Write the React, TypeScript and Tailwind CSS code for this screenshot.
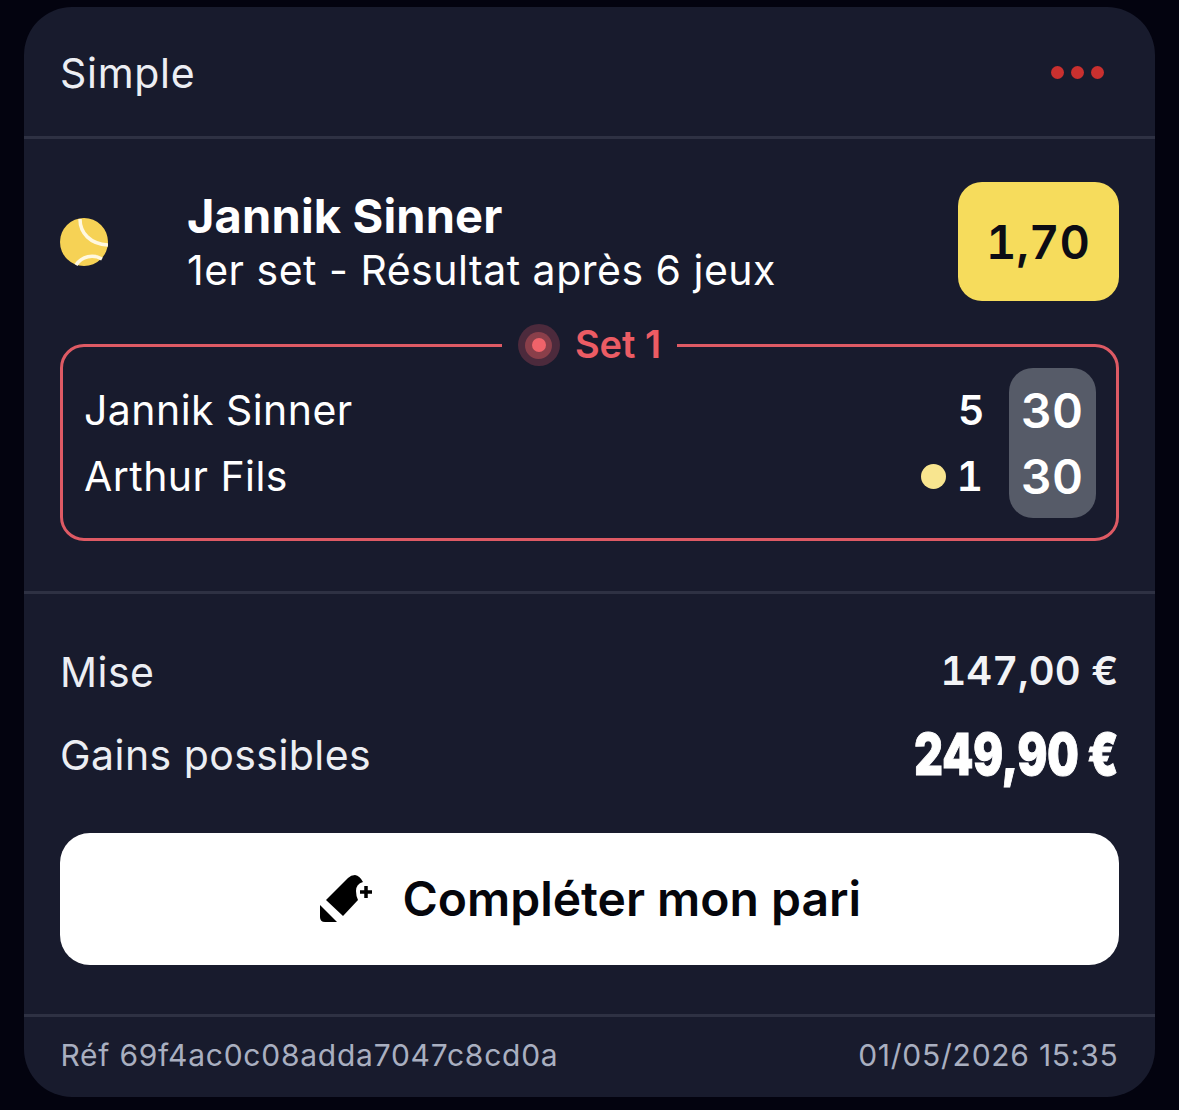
export default function App() {
  return (
    <div className="w-[1179px] h-[1110px] overflow-hidden bg-[#03030f] pt-[7px] pl-[24px] font-['Inter',sans-serif]">
      <div className="w-[1131px] h-[1090px] rounded-[48px] bg-[#181b2d] flex flex-col">
        {/* header */}
        <div className="h-[132px] shrink-0 border-b-[3px] border-[#2e3143] flex items-center justify-between pl-[36px] pr-[51px] pt-[1px]">
          <span className="pt-[2px] text-[41px] leading-none tracking-[0.7px] text-[#eceef3]">Simple</span>
          <div className="flex gap-[7px]">
            <span className="w-[13px] h-[13px] rounded-full bg-[#c9302f]" />
            <span className="w-[13px] h-[13px] rounded-full bg-[#c9302f]" />
            <span className="w-[13px] h-[13px] rounded-full bg-[#c9302f]" />
          </div>
        </div>

        {/* selection */}
        <div className="h-[455px] shrink-0 border-b-[3px] border-[#2e3143] pl-[36px] pr-[36.5px] pt-[43px]">
          <div className="flex items-center h-[119px]">
            <svg width="48" height="48" viewBox="0 0 48 48" className="shrink-0">
              <circle cx="24" cy="24" r="24" fill="#f6d255" />
              <path d="M20 1 C20 15 30 26 48 27" fill="none" stroke="#fff8e0" strokeWidth="3.500" />
              <path d="M16 47 C22 38 33 36 42 41" fill="none" stroke="#fff8e0" strokeWidth="3.500" />
            </svg>
            <div className="ml-[79px] flex-1 pt-[2px]">
              <div className="text-[47px] leading-[54px] font-bold tracking-[0.15px] text-white">Jannik Sinner</div>
              <div className="text-[41px] leading-[54px] tracking-[0.5px] text-white">1er set - Résultat après 6 jeux</div>
            </div>
            <div className="w-[161px] h-[119px] rounded-[24px] bg-[#f6dc5c] flex items-center justify-center pt-[2px] text-[47px] font-semibold tabular-nums text-[#0c0c14]">
              1,70
            </div>
          </div>

          <div className="relative mt-[43px] h-[197px] rounded-[24px] border-[3px] border-[#de5a64] flex items-center justify-between pl-[21px] pr-[20px]">
            <div className="absolute -top-[26px] left-[439px] w-[175px] h-[48px] bg-[#181b2d] flex items-center justify-center gap-[15px]">
              <span className="relative w-[42px] h-[42px] rounded-full bg-[#4c2a3c] flex items-center justify-center">
                <span className="w-[27px] h-[27px] rounded-full bg-[#8a3f4a] flex items-center justify-center">
                  <span className="w-[14px] h-[14px] rounded-full bg-[#f0636a]" />
                </span>
              </span>
              <span className="pb-[2px] text-[38px] leading-none font-semibold text-[#ec5c64]">Set 1</span>
            </div>
            <div className="flex flex-col gap-[17px] pt-[1px] text-[41px] leading-[49px] tracking-[0.45px] text-white">
              <div>Jannik Sinner</div>
              <div>Arthur Fils</div>
            </div>
            <div className="flex items-center gap-[24px]">
              <div className="flex flex-col gap-[17px] pt-[1px] text-[41px] leading-[49px] font-semibold tabular-nums text-white items-end">
                <div>5</div>
                <div className="flex items-center gap-[11px]">
                  <span className="w-[25px] h-[25px] rounded-full bg-[#f8e58f]" />
                  <span className="w-[28px] text-left">1</span>
                </div>
              </div>
              <div className="w-[87px] h-[150px] rounded-[24px] bg-[#565b68] flex flex-col items-center justify-center gap-[17px] pt-[2px] text-[48px] leading-[49px] font-semibold tabular-nums text-white">
                <div>30</div>
                <div>30</div>
              </div>
            </div>
          </div>
        </div>

        {/* stake */}
        <div className="h-[423px] shrink-0 border-b-[3px] border-[#2e3143] pl-[36px] pr-[36.5px] pt-[54px]">
          <div className="flex items-center justify-between h-[49px]">
            <span className="text-[41px] leading-none tracking-[0.5px] text-[#eceef3]">Mise</span>
            <span className="pb-[3px] text-[40px] leading-none font-semibold tabular-nums text-[#f2f3f6]">147,00 €</span>
          </div>
          <div className="flex items-center justify-between h-[60px] mt-[28px]">
            <span className="text-[41px] leading-none tracking-[0.45px] text-[#eceef3]">Gains possibles</span>
            <span className="text-[56px] leading-none font-black text-white origin-right scale-x-[0.79] scale-y-[1.02] [-webkit-text-stroke:1px_white]">249,90 €</span>
          </div>
          <div className="mt-[48px] h-[132px] rounded-[30px] bg-white flex items-center justify-center gap-[30px] pl-[3px]">
            <svg width="52" height="48" viewBox="0 0 52 48" className="shrink-0">
              <path d="M0 30 L17 47 L5 47 Q0 47 0 42 Z" fill="#000" />
              <path d="M6 25 L28 3 Q31 0 35 0 Q40 1 43 7 Q36 9 36 16 Q36 21 38 25 L23 41 Z" fill="#000" />
              <path d="M46 11 V23 M40 17 H52" fill="none" stroke="#000" strokeWidth="3.500" />
            </svg>
            <span className="text-[48px] leading-none font-semibold text-[#05060c]">Compléter mon pari</span>
          </div>
        </div>

        {/* footer */}
        <div className="flex-1 flex items-center justify-between pl-[36.5px] pr-[36.5px] pb-[4px] text-[30px] leading-none text-[#a9afc0] tracking-[0.75px]">
          <span>Réf 69f4ac0c08adda7047c8cd0a</span>
          <span>01/05/2026 15:35</span>
        </div>
      </div>
    </div>
  );
}
